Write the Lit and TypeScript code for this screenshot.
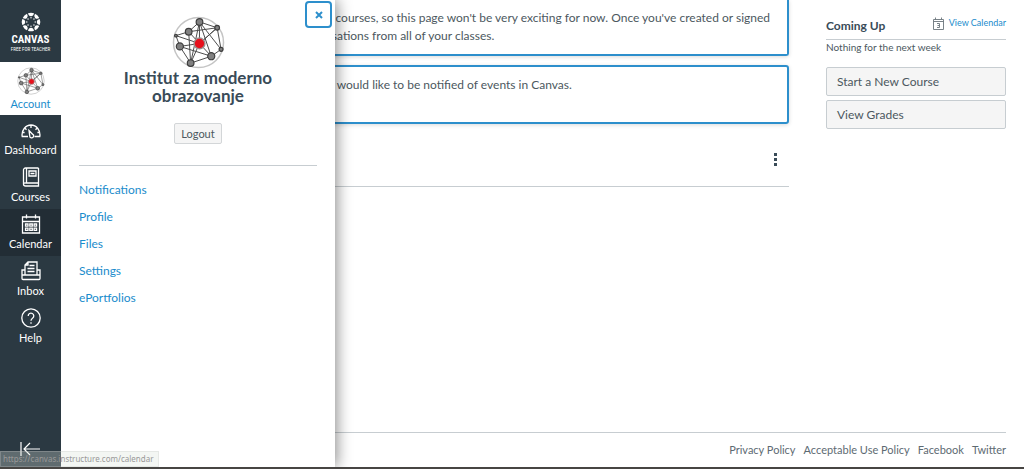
import { LitElement, html, css, svg } from "lit";
import { customElement, state } from "lit/decorators.js";

const network = (size: number) => html`
  <svg width=${size} height=${size} viewBox="0 0 54 54" aria-hidden="true">
    <circle cx="27" cy="27" r="25.5" fill="#fff" stroke="#c4c4c4" stroke-width="1.5" />
    <g stroke="#4a4a4a" stroke-width="1" fill="none">
      <path d="M28 6 17 16 4 20 8 31 19 48 40 41 50 34 46 12Z" />
      <path d="M28 6 40 41 8 31M17 16 28 28 46 12 17 16 19 48 28 6 28 28 8 31M28 6 50 34M28 28 4 20M19 48 28 28 40 41M28 28 46 12" />
    </g>
    <g fill="#808080" stroke="#3c3c3c" stroke-width="1.2">
      <circle cx="28" cy="6" r="3.4" />
      <circle cx="17" cy="16" r="3.4" />
      <circle cx="8" cy="31" r="3.6" />
      <circle cx="19" cy="48" r="3.4" />
      <circle cx="40" cy="41" r="3.6" />
      <circle cx="46" cy="12" r="2.4" />
      <circle cx="50" cy="34" r="2" />
      <circle cx="4" cy="20" r="1.4" />
    </g>
    <circle cx="28" cy="28" r="5.500" fill="#e8101c" stroke="#9d8d8d" stroke-width="1.5" />
  </svg>
`;

const segments = [0, 45, 90, 135, 180, 225, 270, 315];

const icons: Record<string, unknown> = {
  Dashboard: svg`<path d="M7 16.500H1.200C.2 10.500 4.600 5 10 5s9.800 5.500 8.800 11.500H13.500M10 5v3M3.800 8l1.700 1.700M16.200 8l-1.700 1.700M1.300 12.500h2.300M18.700 12.500h-2.300"/><path d="M8 10.500l3.500 3.600a2 2 0 1 1-2.800 1.500z"/>`,
  Courses: svg`<path d="M17.500 1H4.500A2 2 0 0 0 2.500 3v14a2 2 0 0 0 2 2h13v-3H4.500a1.500 1.500 0 0 0-2 1.500M17.500 1v15M5.500 1v15M8 4h7v5H8zM9.500 6.500h4"/>`,
  Calendar: svg`<path d="M1.500 3h17v16h-17zM1.500 7.500h17M5.500.5v4M14.500.5v4M4.500 10h2.500v2.200H4.500zM8.800 10h2.500v2.200H8.800zM13.100 10h2.500v2.200h-2.500zM4.500 14.200h2.500v2.200H4.500zM8.800 14.200h2.500v2.200H8.800zM13.100 14.200h2.500v2.200h-2.500z"/>`,
  Inbox: svg`<path d="M4 14V4l3-3h9v13M7 1v3H4M8.500 4.500h5M6.500 7.500h7M6.500 10.500h7M4 9H1v8.500a1 1 0 0 0 1 1h16a1 1 0 0 0 1-1V9h-3M1 14h18"/>`,
  Help: svg`<circle cx="10" cy="10" r="9.200"/><path d="M7.200 8a2.800 2.800 0 1 1 4.300 2.300c-1 .7-1.500 1.100-1.500 2.500M10 14.300v1.500"/>`,
};

@customElement("app-root")
export class AppRoot extends LitElement {
  @state() private drawerOpen = true;

  static styles = css`
    :host {
      display: block;
      font: 12px/18px Lato, "Liberation Sans", sans-serif;
      color: #4c5860;
    }
    * { box-sizing: border-box; }
    a { color: #1a8ccc; text-decoration: none; }
    button { font: inherit; color: inherit; cursor: pointer; margin: 0; }
    svg { display: block; }
    p, h2, ul { margin: 0; padding: 0; }
    ul { list-style: none; }

    .page {
      position: relative;
      display: grid;
      grid-template-columns: 61px minmax(0, 1fr);
      min-height: 100vh;
      overflow: hidden;
      background: #fff;
      border-bottom: 2px solid #474543;
    }

    .nav {
      z-index: 1;
      display: flex;
      flex-direction: column;
      background: #2b3942;
      color: #fff;
    }
    .logo {
      display: flex;
      flex-direction: column;
      align-items: center;
      height: 62px;
      padding-top: 12px;
      color: #fff;
    }
    .word {
      font: bold 11px/12px "Roboto Condensed", Roboto, sans-serif;
      margin-top: 2px;
    }
    .tier { font: 5px/6px "Roboto Condensed", Roboto, sans-serif; white-space: nowrap; }
    .item {
      display: flex;
      flex-direction: column;
      align-items: center;
      gap: 2px;
      height: 47px;
      padding-top: 5px;
      color: #fff;
      font-size: 11px;
      line-height: 16px;
    }
    .item svg { fill: none; stroke: #fff; stroke-width: 1.3; }
    .item.current { height: 53px; background: #fff; color: #1a8ccc; gap: 1px; }
    .item.current svg { stroke: none; }
    .item.hover { background: #222d35; }
    .collapse {
      margin-top: auto;
      border: 0;
      background: none;
      padding: 0 20px 8px;
    }
    .collapse svg { fill: none; stroke: #fff; stroke-width: 1.2; }

    .drawer {
      position: absolute;
      top: 0;
      bottom: 0;
      left: 61px;
      width: 274px;
      padding: 16px 18px;
      background: #fff;
      box-shadow: 2px 0 14px rgba(0, 0, 0, 0.45);
    }
    .close {
      position: absolute;
      top: 1px;
      right: 3px;
      width: 27px;
      height: 27px;
      display: grid;
      place-items: center;
      padding: 0;
      border: 2px solid #2d8fcc;
      border-radius: 4px;
      background: #fff;
    }
    .profile {
      display: flex;
      flex-direction: column;
      align-items: center;
      padding-bottom: 21px;
      border-bottom: 1px solid #c7cdd1;
      text-align: center;
    }
    .profile h2 {
      font-size: 17px;
      line-height: 18px;
      color: #394b58;
      margin-bottom: 18px;
    }
    .logout {
      height: 21px;
      padding: 0 6px;
      border: 1px solid #d3d6d8;
      border-radius: 2px;
      background: #f5f5f5;
      font-size: 11px;
      line-height: 18px;
    }
    .links { padding-top: 15px; }
    .links li { line-height: 18px; margin-bottom: 9px; }

    .body { display: flex; flex-direction: column; padding: 0 18px 0 24px; }
    .columns { display: grid; grid-template-columns: minmax(0, 1fr) 180px; gap: 37px; }
    .card {
      border: 2px solid #2d8fcc;
      border-radius: 3px;
      box-shadow: 0 1px 4px rgba(0, 0, 0, 0.15);
      padding: 9px 12px 9px 36px;
    }
    .first { border-top: 0; border-radius: 0 0 3px 3px; height: 56px; margin-bottom: 9px; }
    .second { height: 59px; padding-left: 202px; }
    .heading {
      display: flex;
      justify-content: flex-end;
      padding: 25px 4px 17px;
      border-bottom: 1px solid #c7cdd1;
    }
    .more { width: 20px; height: 20px; padding: 0; border: 0; background: none; }
    .side { padding-top: 15px; }
    .coming {
      display: flex;
      justify-content: space-between;
      height: 25px;
      border-bottom: 1px solid #c7cdd1;
    }
    .coming h2 { font-size: 12px; line-height: 22px; color: #394b58; }
    .coming a { display: flex; gap: 5px; font-size: 9px; line-height: 16px; }
    .none { font-size: 10px; line-height: 14px; margin-bottom: 13px; }
    .action {
      display: block;
      width: 100%;
      height: 29px;
      margin-bottom: 4px;
      padding: 0 10px;
      border: 1px solid #c7cdd1;
      border-radius: 2px;
      background: #f5f5f5;
      text-align: left;
    }
    .footer {
      display: flex;
      justify-content: flex-end;
      gap: 8px;
      margin-top: auto;
      height: 35px;
      border-top: 1px solid #c7cdd1;
      font-size: 11px;
      line-height: 34px;
    }
    .footer a { color: #5d6a72; }

    .status {
      position: absolute;
      z-index: 2;
      left: 0;
      bottom: 0;
      height: 16px;
      padding: 0 4px 0 2px;
      border: 1px solid rgba(200, 200, 200, 0.3);
      background: rgba(215, 225, 215, 0.3);
      color: #999;
      font: 8px/14px "Noto Sans", "Open Sans", sans-serif;
    }
  `;

  private item(label: string, hover = false) {
    return html`<a class="item ${hover ? "hover" : ""}" href="#">
      <svg width="20" height="20" viewBox="0 0 20 20" aria-hidden="true">${icons[label]}</svg>
      ${label}
    </a>`;
  }

  private drawer() {
    return html`<section class="drawer" aria-label="Account">
      <button class="close" aria-label="Close" @click=${() => (this.drawerOpen = false)}>
        <svg width="8" height="8" viewBox="0 0 8 8"><path d="M1 1l6 6M7 1L1 7" stroke="#2d8fcc" stroke-width="2" /></svg>
      </button>
      <div class="profile">
        ${network(53)}
        <h2>Institut za moderno obrazovanje</h2>
        <button class="logout">Logout</button>
      </div>
      <ul class="links">
        ${["Notifications", "Profile", "Files", "Settings", "ePortfolios"].map(
          (name) => html`<li><a href="#">${name}</a></li>`
        )}
      </ul>
    </section>`;
  }

  render() {
    return html`<div class="page">
      <nav class="nav">
        <a class="logo" href="#">
          <svg width="20" height="20" viewBox="0 0 20 20" aria-hidden="true">
            ${segments.map(
              (turn) => svg`<g transform="rotate(${turn} 10 10)" fill="#fff">
                <path d="M7 1.300Q10 .1 13 1.300Q12.400 4.200 10 4.200T7 1.300Z" />
                <circle cx="10" cy="5.800" r=".7" />
              </g>`
            )}
          </svg>
          <span class="word">CANVAS</span>
          <span class="tier">FREE FOR TEACHER</span>
        </a>
        <a class="item current" href="#">${network(28)}Account</a>
        ${this.item("Dashboard")} ${this.item("Courses")} ${this.item("Calendar", true)}
        ${this.item("Inbox")} ${this.item("Help")}
        <button class="collapse" aria-label="Minimize navigation">
          <svg width="20" height="20" viewBox="0 0 20 20"><path d="M1 3v14M20 10H4M10 4l-6 6 6 6" /></svg>
        </button>
      </nav>
      <div class="body">
        <div class="columns">
          <main>
            <div class="card first">
              <p>Welcome to Canvas! You don't have any courses, so this page won't be very exciting for now. Once you've created or signed up for courses, you'll start to see conversations from all of your classes.</p>
            </div>
            <div class="card second">
              <p>how you would like to be notified of events in Canvas.</p>
            </div>
            <div class="heading">
              <button class="more" aria-label="Options">
                <svg width="20" height="20" viewBox="0 0 20 20" fill="#394b58"><path d="M9 4h3v3H9zM9 9h3v3H9zM9 14h3v3H9z" /></svg>
              </button>
            </div>
          </main>
          <aside class="side">
            <div class="coming">
              <h2>Coming Up</h2>
              <a href="#">
                <svg width="11" height="16" viewBox="0 0 11 16" fill="none" stroke="#6b757c"><path d="M.5 4.500h10v10H.5zM.5 6.500h10M2.500 2.500v2M8.500 2.500v2M4 8.500h2.500v4H4M4.500 10.500h2" stroke-width=".9" /></svg>
                View Calendar
              </a>
            </div>
            <p class="none">Nothing for the next week</p>
            <button class="action">Start a New Course</button>
            <button class="action">View Grades</button>
          </aside>
        </div>
        <footer class="footer">
          <a href="#">Privacy Policy</a><a href="#">Acceptable Use Policy</a><a href="#">Facebook</a><a href="#">Twitter</a>
        </footer>
      </div>
      ${this.drawerOpen ? this.drawer() : null}
      <div class="status">https://canvas.instructure.com/calendar</div>
    </div>`;
  }
}
